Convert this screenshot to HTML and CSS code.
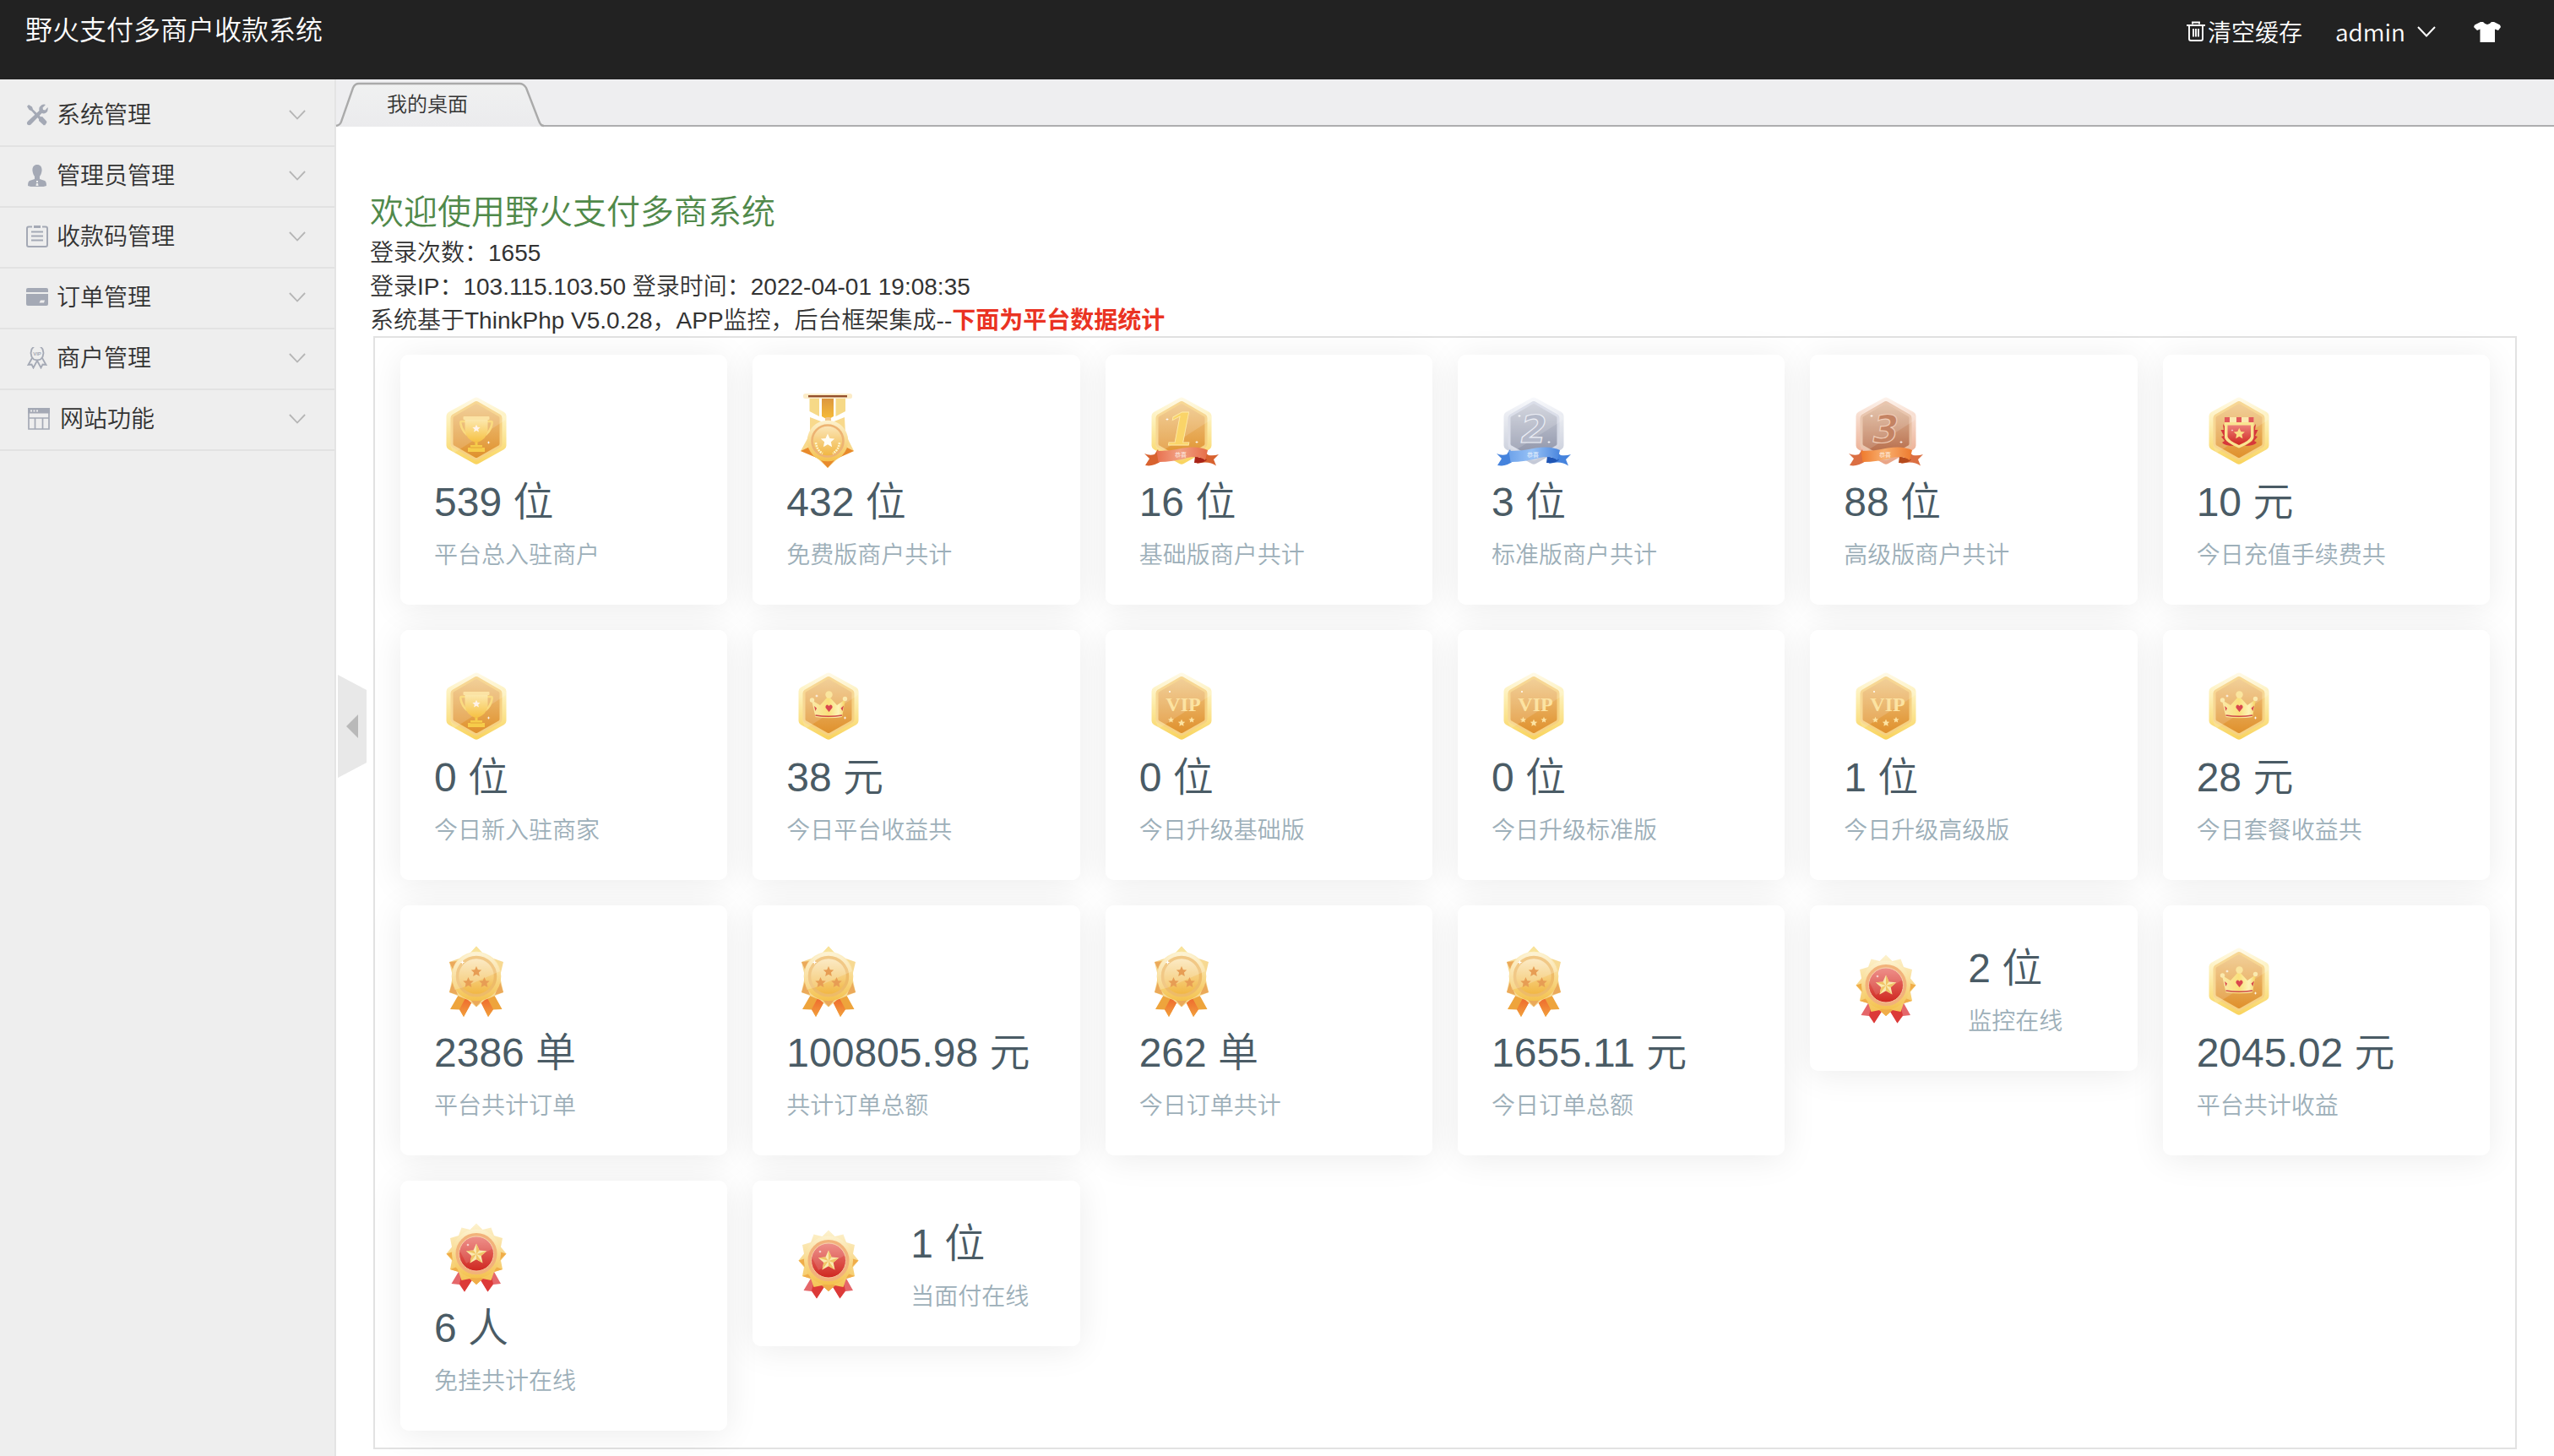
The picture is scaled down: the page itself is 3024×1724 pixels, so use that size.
FILE: index.html
```
<!DOCTYPE html>
<html lang="zh-CN">
<head>
<meta charset="utf-8">
<title>野火支付多商户收款系统</title>
<link rel="stylesheet" href="styles.css">
</head>
<body>
<svg class="defs" aria-hidden="true">
  <defs>
    <linearGradient id="gHexOut" x1="0" y1="0" x2="0" y2="1"><stop offset="0" stop-color="#fffae8"/><stop offset=".35" stop-color="#fdf0b8"/><stop offset="1" stop-color="#f9d35c"/></linearGradient>
    <linearGradient id="gHexIn" x1="0" y1="0" x2="0" y2="1"><stop offset="0" stop-color="#f0c888"/><stop offset="1" stop-color="#df8f2a"/></linearGradient>
    <linearGradient id="gSilOut" x1="0" y1="0" x2="0" y2="1"><stop offset="0" stop-color="#f8f9fc"/><stop offset="1" stop-color="#c3c8d6"/></linearGradient>
    <linearGradient id="gSilIn" x1="0" y1="0" x2="0" y2="1"><stop offset="0" stop-color="#cdd0da"/><stop offset="1" stop-color="#8a90a6"/></linearGradient>
    <linearGradient id="gBroOut" x1="0" y1="0" x2="0" y2="1"><stop offset="0" stop-color="#fdf3ec"/><stop offset="1" stop-color="#e9a384"/></linearGradient>
    <linearGradient id="gBroIn" x1="0" y1="0" x2="0" y2="1"><stop offset="0" stop-color="#e2bfa3"/><stop offset="1" stop-color="#b26340"/></linearGradient>
    <linearGradient id="gGold" x1="0" y1="0" x2="0" y2="1"><stop offset="0" stop-color="#fdf2cf"/><stop offset="1" stop-color="#f4c14d"/></linearGradient>
    <linearGradient id="gDisc" x1="0" y1="0" x2="0" y2="1"><stop offset="0" stop-color="#fbe7bb"/><stop offset="1" stop-color="#f1b53f"/></linearGradient>
    <linearGradient id="gCup" x1="0" y1="0" x2="0" y2="1"><stop offset="0" stop-color="#fce9b0"/><stop offset="1" stop-color="#f6c040"/></linearGradient>
    <linearGradient id="gCrown" x1="0" y1="0" x2="1" y2="0"><stop offset="0" stop-color="#fbe9a8"/><stop offset=".5" stop-color="#fae07c"/><stop offset=".8" stop-color="#fdf3b8"/><stop offset="1" stop-color="#f5cf5c"/></linearGradient>
    <linearGradient id="gRibR" x1="0" y1="0" x2="1" y2="0"><stop offset="0" stop-color="#e8714f"/><stop offset=".45" stop-color="#f2a183"/><stop offset="1" stop-color="#e66d48"/></linearGradient>
    <linearGradient id="gRibB" x1="0" y1="0" x2="1" y2="0"><stop offset="0" stop-color="#6da2ea"/><stop offset=".45" stop-color="#98c2f6"/><stop offset="1" stop-color="#4a86de"/></linearGradient>
    <linearGradient id="gRibO" x1="0" y1="0" x2="1" y2="0"><stop offset="0" stop-color="#ef7a2c"/><stop offset=".45" stop-color="#f8b070"/><stop offset="1" stop-color="#ee7a2e"/></linearGradient>
    <linearGradient id="gRed" x1="0" y1="0" x2="0" y2="1"><stop offset="0" stop-color="#ec7f78"/><stop offset="1" stop-color="#cf2720"/></linearGradient>
    <linearGradient id="gTail" x1="0" y1="0" x2="0" y2="1"><stop offset="0" stop-color="#ee5f2c"/><stop offset="1" stop-color="#f2a03c"/></linearGradient>
    <linearGradient id="gStrip" x1="0" y1="0" x2="0" y2="1"><stop offset="0" stop-color="#da9440"/><stop offset="1" stop-color="#f8bd36"/></linearGradient>
    <path id="star" d="M0-10 2.9-3.6 9.7-3 4.6 1.6 6 8.4 0 4.9-6 8.4-4.6 1.6-9.7-3-2.9-3.6Z"/>
    <path id="spark" d="M0-2.6.6-.6 2.6 0 .6.6 0 2.6-.6.6-2.6 0-.6-.6Z" fill="#fff"/>
    <path id="hexOut" d="M47.500 11.200Q50 9.800 52.500 11.200L83 28Q85.500 29.500 85.500 32.500V67.500Q85.500 70.500 83 72L52.500 89Q50 90.500 47.500 89L17 72Q14.500 70.500 14.500 67.500V32.500Q14.500 29.500 17 28Z"/>
    <path id="hexIn" d="M48 17.200Q50 16 52 17.200L77.500 32Q79 33 79 35V65.500Q79 67.500 77.500 68.500L52 83Q50 84.200 48 83L22.500 68.500Q21 67.500 21 65.500V35Q21 33 22.500 32Z"/>
    <path id="shine" d="M19.500 31 48.500 14 50 13.500 51.500 14 85 33V37L22.500 77 19.500 68Z" fill="#fff" opacity=".15"/>
  </defs>

  <symbol id="hexGold" viewBox="0 0 100 100">
    <use href="#hexOut" fill="url(#gHexOut)"/><use href="#hexIn" fill="url(#gHexIn)" stroke="#f6d182" stroke-width="3"/><use href="#shine"/>
  </symbol>
  <symbol id="hexSilver" viewBox="0 0 100 100">
    <use href="#hexOut" fill="url(#gSilOut)"/><use href="#hexIn" fill="url(#gSilIn)" stroke="#d5d9e5" stroke-width="3"/><use href="#shine"/>
  </symbol>
  <symbol id="hexBronze" viewBox="0 0 100 100">
    <use href="#hexOut" fill="url(#gBroOut)"/><use href="#hexIn" fill="url(#gBroIn)" stroke="#e6bda2" stroke-width="3"/><use href="#shine"/>
  </symbol>

  <symbol id="trophy" viewBox="0 0 100 100">
    <use href="#hexGold"/>
    <path d="M37 39H32Q31 39 31.500 42 33 50 39 55M63 39H68Q69 39 68.500 42 67 50 61 55" fill="none" stroke="#fadb80" stroke-width="2.600"/>
    <path d="M36.500 36H63.500V50Q62.500 60 50 64.500 37.500 60 36.500 50Z" fill="url(#gCup)"/>
    <rect x="34.500" y="33" width="31" height="4" rx="1" fill="#fbe3a4"/>
    <path d="M48.500 64H51.500V67H57V70H60V75H40V70H43V67H48.500Z" fill="#f6cc4a"/>
    <path d="M43 70H57" stroke="#e4a338"/>
    <use href="#star" transform="translate(50 47.500) scale(.48)" fill="#fff3ea"/>
    <use href="#spark" transform="translate(64.500 64) scale(.8)"/>
  </symbol>

  <symbol id="crown" viewBox="0 0 100 100">
    <use href="#hexGold"/>
    <path d="M30 43 40 49 50 38 60 49 70 42 66 63Q50 65.500 34.500 63Z" fill="url(#gCrown)"/>
    <circle cx="50.500" cy="36.500" r="4.200" fill="#fae59f"/><circle cx="30.500" cy="43" r="2.700" fill="#fae9ae"/><circle cx="69.500" cy="41.500" r="2.700" fill="#fae9ae"/>
    <path d="M34.500 61Q50 63.500 66 61" fill="none" stroke="#cf4a4a" stroke-width="1.500"/>
    <path d="M50.500 57 46.500 52Q46 48.500 49 48.500L50.500 50 52 48.500Q55 48.500 54.500 52ZM33 50 36 52.500 34.500 56ZM68 49.500 64.500 52.500 66.500 56Z" fill="#d9484e"/>
    <use href="#spark" transform="translate(36 38) scale(.8)"/><use href="#spark" transform="translate(69.500 64) scale(.8)"/>
  </symbol>

  <symbol id="vip" viewBox="0 0 100 100">
    <use href="#hexGold"/>
    <g fill="#fce3a2"><use href="#star" transform="translate(37.500 66.500) scale(.37)"/><use href="#star" transform="translate(50 70) scale(.44)"/><use href="#star" transform="translate(62 66.500) scale(.37)"/></g>
    <circle cx="36" cy="33" r="1" fill="#fff"/>
  </symbol>

  <symbol id="shield" viewBox="0 0 100 100">
    <use href="#hexGold"/>
    <path d="M31 42 35 47V62L44 68Q33 68 30 64L33 62 29 57 32 56 28.500 49 32 49ZM70 42 66 47V62L57 68Q68 68 71 64L68 62 72 57 69 56 72.500 49 69 49Z" fill="#d6383a"/>
    <path d="M33 40H67.500V58Q67 63 50 70.500 33.500 63 33 58Z" fill="#fae491"/>
    <path d="M36.500 43.500H64V57Q63 61.500 50 67 37.500 61.500 36.500 57Z" fill="url(#gRed)"/>
    <path d="M33 34H67.500V40H33Z" fill="#fbe8b0"/><path d="M33 34h6v6h-6ZM47 34h6v6h-6ZM61.500 34h6v6h-6Z" fill="#e2585a"/>
    <use href="#star" transform="translate(50.300 53.500) scale(.68)" fill="#fadf86"/>
    <use href="#spark" transform="translate(42 49.500) scale(.6)"/>
  </symbol>

  <symbol id="rank1" viewBox="0 0 100 100">
    <use href="#hexGold"/>
    <use href="#spark" transform="translate(33 36.500) scale(.8)"/><use href="#spark" transform="translate(68 63.500) scale(.8)"/>
    <path d="M22 72 18 78Q12 80 6 77L12 83 7 91Q16 93 26 86ZM78 76 82 79Q88 80 94 78L88 84 91 91.500Q82 85 68 89Z" fill="#d8622f"/>
    <path d="M66 80Q76 83 80 84 77 89 65 88Z" fill="#a92418"/>
    <path d="M20.500 74Q36 74 52 70.500 70 67.500 81 73L78 85Q71 79 57 82 40 87 22.500 87Z" fill="url(#gRibR)"/>
  </symbol>
  <symbol id="rank2" viewBox="0 0 100 100">
    <use href="#hexSilver"/>
    <use href="#spark" transform="translate(33 32.500) scale(.8)"/><use href="#spark" transform="translate(68 63.500) scale(.8)"/>
    <path d="M22 72 18 78Q12 80 6 77L12 83 7 91Q16 93 26 86ZM78 76 82 79Q88 80 94 78L88 84 91 91.500Q82 85 68 89Z" fill="#4583dd"/>
    <path d="M66 80Q76 83 80 84 77 89 65 88Z" fill="#1f55b4"/>
    <path d="M20.500 74Q36 74 52 70.500 70 67.500 81 73L78 85Q71 79 57 82 40 87 22.500 87Z" fill="url(#gRibB)"/>
  </symbol>
  <symbol id="rank3" viewBox="0 0 100 100">
    <use href="#hexBronze"/>
    <use href="#spark" transform="translate(33 32.500) scale(.8)"/><use href="#spark" transform="translate(68 63.500) scale(.8)"/>
    <path d="M22 72 18 78Q12 80 6 77L12 83 7 91Q16 93 26 86ZM78 76 82 79Q88 80 94 78L88 84 91 91.500Q82 85 68 89Z" fill="#db6f42"/>
    <path d="M66 80Q76 83 80 84 77 89 65 88Z" fill="#b54a1c"/>
    <path d="M20.500 74Q36 74 52 70.500 70 67.500 81 73L78 85Q71 79 57 82 40 87 22.500 87Z" fill="url(#gRibO)"/>
  </symbol>

  <symbol id="medal" viewBox="0 0 100 100">
    <path d="M28 34 49 42 69 34 70 54 80 74 62 82 49 94 36 82 17 74 28 54Z" fill="#f8d98c"/>
    <path d="M17 74 30 68 36 82ZM80 74 68 68 62 82ZM40 84 49 94 58 84Z" fill="#e88a2c"/>
    <path d="M27.500 10H70V27L49 37 27.500 27Z" fill="#fff"/>
    <path d="M27.500 10H39V33L27.500 27ZM58.500 10H70V27L58.500 33Z" fill="#f6d987"/>
    <path d="M42 10H56V33L49 37 42 33Z" fill="url(#gStrip)"/>
    <rect x="20" y="6" width="58" height="6" rx="2.500" fill="#fcecc8"/><rect x="26" y="8" width="46" height="2.400" fill="#94502b"/>
    <rect x="46" y="34" width="7" height="6" rx="2" fill="#f3c88a"/>
    <circle cx="49" cy="62" r="24.300" fill="url(#gGold)"/>
    <circle cx="49" cy="62" r="18.500" fill="url(#gDisc)" stroke="#edb373" stroke-width="2.600"/>
    <path d="M35 64Q36 73 43 77M63 64Q62 73 55 77" fill="none" stroke="#fdf3c9" stroke-width="2.600" stroke-dasharray="2 1"/>
    <use href="#star" transform="translate(49 62) scale(.85)" fill="#fffdf4"/>
  </symbol>

  <symbol id="threeStar" viewBox="0 0 100 100">
    <path d="M30 64 19 83 30 83.500 35 92 46 72ZM70 64 80.500 83 70 83.500 64 92 54 72Z" fill="#eea43c"/>
    <path d="M35 66 46 72 35 92 30 83 37 70ZM65 66 54 72 64 92 70 83 63 70Z" fill="url(#gTail)"/>
    <path d="M50 8.500 59 19 82 27 78 44 82 63 60 72 50 80.500 40 72 18 63 22 44 18 27 41 19Z" fill="#f7d992"/>
    <path d="M18 63 22 50 28 66ZM82 63 78 50 72 66ZM18 27 24 40 28 26ZM43 72H57L50 80Z" fill="#eba95a"/>
    <path d="M50 8.500 42 17H58Z" fill="#f9e39a"/>
    <circle cx="50" cy="44" r="29.300" fill="url(#gGold)"/>
    <circle cx="50" cy="44" r="22.500" fill="url(#gDisc)" stroke="#eebb68" stroke-width="3.500"/>
    <path d="M21 44A29 29 0 0 1 78 38L35 57 24 60Z" fill="#fff" opacity=".2"/>
    <g fill="#e79d54"><use href="#star" transform="translate(50 38.500) scale(.64)"/><use href="#star" transform="translate(40.500 51.500) scale(.64)"/><use href="#star" transform="translate(59.500 51.500) scale(.64)"/></g>
    <use href="#spark" transform="translate(33.500 27.500) scale(1.100)"/>
  </symbol>

  <symbol id="seal" viewBox="0 0 100 100">
    <path d="M30 66 20.500 82 30 83 36 91.500 46 76ZM70 66 79 82 70 83 63.500 91.500 54 76Z" fill="#e5676a"/>
    <path d="M34 66 46 76 36 91.500 30 82ZM66 66 54 76 63.500 91.500 70 82Z" fill="#dc3a38"/>
    <path d="M50 10.500 57.500 18 67.500 15.500 71 25 81 28 79 38.500 85.500 46.500 79 54.500 81 65 71 68 67.500 78 57.500 76 50 83 42.500 76 32.500 78 29 68 19 65 21 54.500 14.500 46.500 21 38.500 19 28 29 25 32.500 15.500 42.500 18Z" fill="url(#gGold)"/>
    <path d="M14.500 46.500 23 44V55ZM85.500 46.500 77 44V55ZM19 65 27 62 29 68ZM81 65 73 62 71 68ZM42 76 50 72 58 76 50 83Z" fill="#f0ad49"/>
    <circle cx="50" cy="46.500" r="29" fill="url(#gGold)"/>
    <circle cx="50" cy="46.500" r="24.500" fill="#f2b27a"/>
    <circle cx="50" cy="46.500" r="20.500" fill="url(#gRed)" stroke="#f6c6a0" stroke-width="1"/>
    <path d="M30 42A20.500 20.500 0 0 1 70 40L38 58Z" fill="#fff" opacity=".13"/>
    <use href="#star" transform="translate(50 47) scale(1.250)" fill="#fae9ae"/>
    <path d="M50 47V34.500L53.600 42.500ZM50 47 62 43.200 55.700 49ZM50 47 57.500 57.500 50 53ZM50 47 42.500 57.500 44.300 49ZM50 47 38 43.200 46.400 42.500Z" fill="#f0c566"/>
    <use href="#spark" transform="translate(40 36) scale(.7)"/>
  </symbol>

  <symbol id="tools" viewBox="0 0 26 26">
    <path d="M1 3 3 1 7 3.500 8 6.500 21 19 24.500 22 22 25.500 18.500 22 6.500 8.500 3.500 7Z"/><path d="M15 16 19 15 24.500 21 21 25.500 15 20Z"/>
    <path d="M18 1.500Q21 0 23 1L19.500 4.500 20 7 22.500 7.500 25.500 4Q26.500 8.500 23.500 10.500 21 12 18.500 11L5.500 24.500Q3.500 26 1.500 24.500 0 22.500 2 20.500L15.500 8Q14.500 4 18 1.500Z"/>
  </symbol>
  <symbol id="user" viewBox="0 0 26 26">
    <path d="M13 0C17 0 19 3 18.500 7.500 18 11 17 12.500 16 14V17L22 19Q24 20 24 25 18 27 13 27 8 27 2 25 2 20 4 19L10 17V14C9 12.500 8 11 7.500 7.500 7 3 9 0 13 0Z"/><path d="M12 19h2v2h-2ZM12 22h2l.5 3h-3Z" fill="#eee"/>
  </symbol>
  <symbol id="clip" viewBox="0 0 26 26"><path d="M7 1.500H3Q1 1.500 1 3.500V23Q1 25 3 25H23Q25 25 25 23V3.500Q25 1.500 23 1.500H19" fill="none" stroke="#a4a9b5" stroke-width="2"/><path d="M9-.5H17V3H9ZM6 6.500H20V8.500H6ZM6 11.500H20V13.500H6ZM6 16.500H20V18.500H6Z"/></symbol>
  <symbol id="wallet" viewBox="0 0 26 26"><path d="M2 2H24Q26 2 26 4V7H0V4Q0 2 2 2ZM0 9H26V21Q26 23 24 23H2Q0 23 0 21Z"/><path d="M17 16.500H22L21 19.500H15.500Z" fill="#eee"/></symbol>
  <symbol id="badge" viewBox="0 0 26 26"><g fill="none" stroke="#a4a9b5" stroke-width="1.800"><path d="M13-1.500 17-.5 19.500 2.500 20.500 7 19.500 11.500 17 14.500 13 15.500 9 14.500 6.500 11.500 5.500 7 6.500 2.500 9-.5Z"/><path d="M7 13 2.500 21 6.500 20.500 8.500 24.500 13 16 17.500 24.500 19.500 20.500 23.500 21 19 13"/></g></symbol>
  <symbol id="layout" viewBox="0 0 26 26"><path d="M0 0H26V6.500H0Z"/><path d="M1 1H25V25H1ZM1 12H25M8.500 12V25M17.500 12V25" fill="none" stroke="#a4a9b5" stroke-width="1.700"/><path d="M3 2.500h2v2h-2ZM6.500 2.500h2v2h-2ZM10 2.500h2v2h-2Z" fill="#eee"/></symbol>
  <symbol id="chev" viewBox="0 0 22 13"><path d="M1 1 11 11.500 21 1" fill="none" stroke="currentColor" stroke-width="2"/></symbol>
</svg>

<header class="topbar">
  <h1 class="brand">野火支付多商户收款系统</h1>
  <nav class="tools">
    <a class="clear"><svg class="trash" viewBox="0 0 22 24"><path d="M7 3.500V1.500H15V3.500M0 5H22M3 5V21Q3 23 5 23H17Q19 23 19 21V5M8 9V18.500M11 9V18.500M14 9V18.500" fill="none" stroke="#fff" stroke-width="1.900"/></svg>清空缓存</a>
    <a class="account">admin<svg class="caret"><use href="#chev"/></svg></a>
    <a class="skin"><svg class="shirt" viewBox="0 0 32 24"><path d="M8 0H11Q16 6 21 0H24L31 3.500 32 6 29 10 25 8.500V24H7.500V8.500L4 10 0 6 1 3.500Z" fill="#fff"/></svg></a>
  </nav>
</header>

<div class="body">
  <aside class="side">
    <a class="item"><svg class="ico"><use href="#tools"/></svg><span>系统管理</span><svg class="arrow"><use href="#chev"/></svg></a>
    <a class="item"><svg class="ico"><use href="#user"/></svg><span>管理员管理</span><svg class="arrow"><use href="#chev"/></svg></a>
    <a class="item"><svg class="ico"><use href="#clip"/></svg><span>收款码管理</span><svg class="arrow"><use href="#chev"/></svg></a>
    <a class="item"><svg class="ico"><use href="#wallet"/></svg><span>订单管理</span><svg class="arrow"><use href="#chev"/></svg></a>
    <a class="item"><svg class="ico" viewBox="0 0 26 26"><use href="#badge"/><text x="13" y="9.500" text-anchor="middle" class="badge-text">VIP</text></svg><span>商户管理</span><svg class="arrow"><use href="#chev"/></svg></a>
    <a class="item item-wide"><svg class="ico"><use href="#layout"/></svg><span>网站功能</span><svg class="arrow"><use href="#chev"/></svg></a>
  </aside>
  <svg class="handle" viewBox="0 0 34 122"><path d="M0 0 34 18V104L0 122Z" fill="#e8e8e8"/><path d="M10 61 24 47V75Z" fill="#b9b9b9"/></svg>

  <main class="main">
    <div class="tabs">
      <div class="tab">
        <svg class="tab-shape" viewBox="0 0 246 56"><defs><linearGradient id="gTab" x1="0" y1="0" x2="0" y2="1"><stop offset="0" stop-color="#f0f1f1"/><stop offset="1" stop-color="#ebebed"/></linearGradient></defs><path d="M0 56V55Q5 54 6 50L20 10Q22 5 27 5H217Q222 5 225 10L240 49Q242 55 246 55V56Z" fill="url(#gTab)"/><path d="M0 55Q5 54 6 50L20 10Q22 5 27 5H217Q222 5 225 10L240 49Q242 55 246 55" fill="none" stroke="#aaa" stroke-width="2.400"/></svg>
        <span class="tab-label">我的桌面</span>
      </div>
    </div>
    <section class="content">
      <h2 class="welcome">欢迎使用野火支付多商系统</h2>
      <p>登录次数：1655</p>
      <p>登录IP：103.115.103.50 登录时间：2022-04-01 19:08:35</p>
      <p>系统基于ThinkPhp V5.0.28，APP监控，后台框架集成--<b class="hot">下面为平台数据统计</b></p>
      <div class="panel">
        <div class="card"><svg class="pic"><use href="#trophy"/></svg><div class="stat"><div class="num">539 位</div><div class="label">平台总入驻商户</div></div></div>
        <div class="card"><svg class="pic"><use href="#medal"/></svg><div class="stat"><div class="num">432 位</div><div class="label">免费版商户共计</div></div></div>
        <div class="card"><svg class="pic" viewBox="0 0 100 100"><use href="#rank1"/><text x="49" y="67" text-anchor="middle" class="rank-one">1</text><text x="49" y="81" text-anchor="middle" class="rib-text">恭喜</text></svg><div class="stat"><div class="num">16 位</div><div class="label">基础版商户共计</div></div></div>
        <div class="card"><svg class="pic" viewBox="0 0 100 100"><use href="#rank2"/><text x="50" y="64" text-anchor="middle" class="rank-num rank-silver">2</text><text x="49" y="81" text-anchor="middle" class="rib-text">恭喜</text></svg><div class="stat"><div class="num">3 位</div><div class="label">标准版商户共计</div></div></div>
        <div class="card"><svg class="pic" viewBox="0 0 100 100"><use href="#rank3"/><text x="50" y="64" text-anchor="middle" class="rank-num rank-bronze">3</text><text x="49" y="81" text-anchor="middle" class="rib-text">恭喜</text></svg><div class="stat"><div class="num">88 位</div><div class="label">高级版商户共计</div></div></div>
        <div class="card"><svg class="pic"><use href="#shield"/></svg><div class="stat"><div class="num">10 元</div><div class="label">今日充值手续费共</div></div></div>

        <div class="card"><svg class="pic"><use href="#trophy"/></svg><div class="stat"><div class="num">0 位</div><div class="label">今日新入驻商家</div></div></div>
        <div class="card"><svg class="pic"><use href="#crown"/></svg><div class="stat"><div class="num">38 元</div><div class="label">今日平台收益共</div></div></div>
        <div class="card"><svg class="pic" viewBox="0 0 100 100"><use href="#vip"/><text x="52" y="56" text-anchor="middle" class="vip-text">VIP</text></svg><div class="stat"><div class="num">0 位</div><div class="label">今日升级基础版</div></div></div>
        <div class="card"><svg class="pic" viewBox="0 0 100 100"><use href="#vip"/><text x="52" y="56" text-anchor="middle" class="vip-text">VIP</text></svg><div class="stat"><div class="num">0 位</div><div class="label">今日升级标准版</div></div></div>
        <div class="card"><svg class="pic" viewBox="0 0 100 100"><use href="#vip"/><text x="52" y="56" text-anchor="middle" class="vip-text">VIP</text></svg><div class="stat"><div class="num">1 位</div><div class="label">今日升级高级版</div></div></div>
        <div class="card"><svg class="pic"><use href="#crown"/></svg><div class="stat"><div class="num">28 元</div><div class="label">今日套餐收益共</div></div></div>

        <div class="card"><svg class="pic"><use href="#threeStar"/></svg><div class="stat"><div class="num">2386 单</div><div class="label">平台共计订单</div></div></div>
        <div class="card"><svg class="pic"><use href="#threeStar"/></svg><div class="stat"><div class="num">100805.98 元</div><div class="label">共计订单总额</div></div></div>
        <div class="card"><svg class="pic"><use href="#threeStar"/></svg><div class="stat"><div class="num">262 单</div><div class="label">今日订单共计</div></div></div>
        <div class="card"><svg class="pic"><use href="#threeStar"/></svg><div class="stat"><div class="num">1655.11 元</div><div class="label">今日订单总额</div></div></div>
        <div class="card card-row"><svg class="pic"><use href="#seal"/></svg><div class="stat"><div class="num">2 位</div><div class="label">监控在线</div></div></div>
        <div class="card"><svg class="pic"><use href="#crown"/></svg><div class="stat"><div class="num">2045.02 元</div><div class="label">平台共计收益</div></div></div>

        <div class="card"><svg class="pic"><use href="#seal"/></svg><div class="stat"><div class="num">6 人</div><div class="label">免挂共计在线</div></div></div>
        <div class="card card-row"><svg class="pic"><use href="#seal"/></svg><div class="stat"><div class="num">1 位</div><div class="label">当面付在线</div></div></div>
      </div>
    </section>
  </main>
</div>
</body>
</html>
```

FILE: styles.css
```
* { box-sizing: border-box; }
html, body { margin: 0; height: 100%; }
body {
  display: flex;
  flex-direction: column;
  overflow: hidden;
  background: #fff;
  color: #333;
  font: 350 28px/40px "Liberation Sans", "Noto Sans CJK SC", sans-serif;
}
h1, h2, p { margin: 0; font-weight: inherit; }
svg { display: block; flex: none; overflow: visible; }
.defs { position: absolute; width: 0; height: 0; }

/* header */
.topbar {
  flex: none;
  display: flex;
  justify-content: space-between;
  height: 94px;
  padding: 0 63px 0 30px;
  background: #222;
  color: #fff;
}
.brand { font-size: 32px; line-height: 73px; }
.tools { display: flex; align-items: center; height: 74px; font-family: "Noto Sans CJK SC", sans-serif; }
.tools a { display: flex; align-items: center; }
.trash { width: 22px; height: 24px; margin-right: 3px; }
.account { margin-left: 39px; }
.caret { width: 22px; height: 13px; margin-left: 14px; }
.skin { margin-left: 45px; }
.shirt { width: 32px; height: 24px; margin-top: 2px; }

/* sidebar */
.body { flex: 1; display: flex; min-height: 0; position: relative; }
.side { flex: none; width: 398px; padding-top: 8px; background: #eee; border-right: 2px solid #e4e4e4; }
.item {
  display: flex;
  align-items: center;
  height: 72px;
  padding: 0 34px 2px 31px;
  border-bottom: 2px solid #e2e2e2;
}
.item span { flex: 1; margin-left: 10px; padding-top: 2px; }
.item-wide { padding-left: 33px; }
.item-wide span { margin-left: 12px; }
.ico { width: 26px; height: 26px; fill: #a4a9b5; }
.arrow { width: 20px; height: 12px; color: #b5b5b5; }
.badge-text { font: bold 6px "Liberation Sans", sans-serif; }
.handle { position: absolute; left: 400px; top: 705px; width: 34px; height: 122px; }

/* tabs */
.main { flex: 1; min-width: 0; }
.tabs { height: 56px; background: #eeeef0; box-shadow: inset 0 -2px #adadaf; }
.tab { position: relative; width: 246px; height: 56px; padding-left: 60px; }
.tab-shape { position: absolute; left: 0; top: 0; width: 246px; height: 56px; }
.tab-label { position: relative; font-size: 24px; line-height: 59px; }

/* dashboard */
.content { padding: 79px 44px 0 40px; }
.welcome { height: 51px; font-size: 40px; line-height: 44px; color: #50894a; }
.hot { color: #ea3323; font-weight: 700; }
.panel {
  position: relative;
  z-index: 0;
  display: grid;
  grid-template-columns: repeat(6, 1fr);
  align-items: start;
  gap: 30px;
  margin: -2px 0 0 4px;
  padding: 20px 30px;
  border: 2px solid #e2e2e2;
}
.card { position: relative; padding: 40px; border-radius: 10px; background: #fff; }
.card::before {
  content: "";
  position: absolute;
  inset: 0;
  z-index: -1;
  border-radius: 10px;
  box-shadow: 0 4px 40px rgba(0, 0, 0, .08);
}
.card-row { display: flex; align-items: center; gap: 47px; }
.pic { width: 100px; height: 100px; }
.stat { height: 116px; padding-top: 2px; }
.num { font-size: 48px; line-height: 66px; color: #4a5b65; white-space: nowrap; }
.label { margin-top: 10px; color: #9dafb9; white-space: nowrap; }

/* lettering on badges */
.vip-text { font: bold 24px "Liberation Serif", serif; fill: #fce3a2; }
.rank-one { font: italic bold 52px "DejaVu Serif", serif; fill: #fad468; stroke: #fdeaa8; stroke-width: .8px; }
.rank-num { font: italic bold 44px "DejaVu Sans", sans-serif; stroke-width: 1.200px; }
.rank-silver { fill: #b4b9c9; stroke: #eceef5; }
.rank-bronze { fill: #c48363; stroke: #f0cdb8; }
.rib-text { font: 7px "Noto Sans CJK SC", sans-serif; fill: #fff; opacity: .75; }
```
